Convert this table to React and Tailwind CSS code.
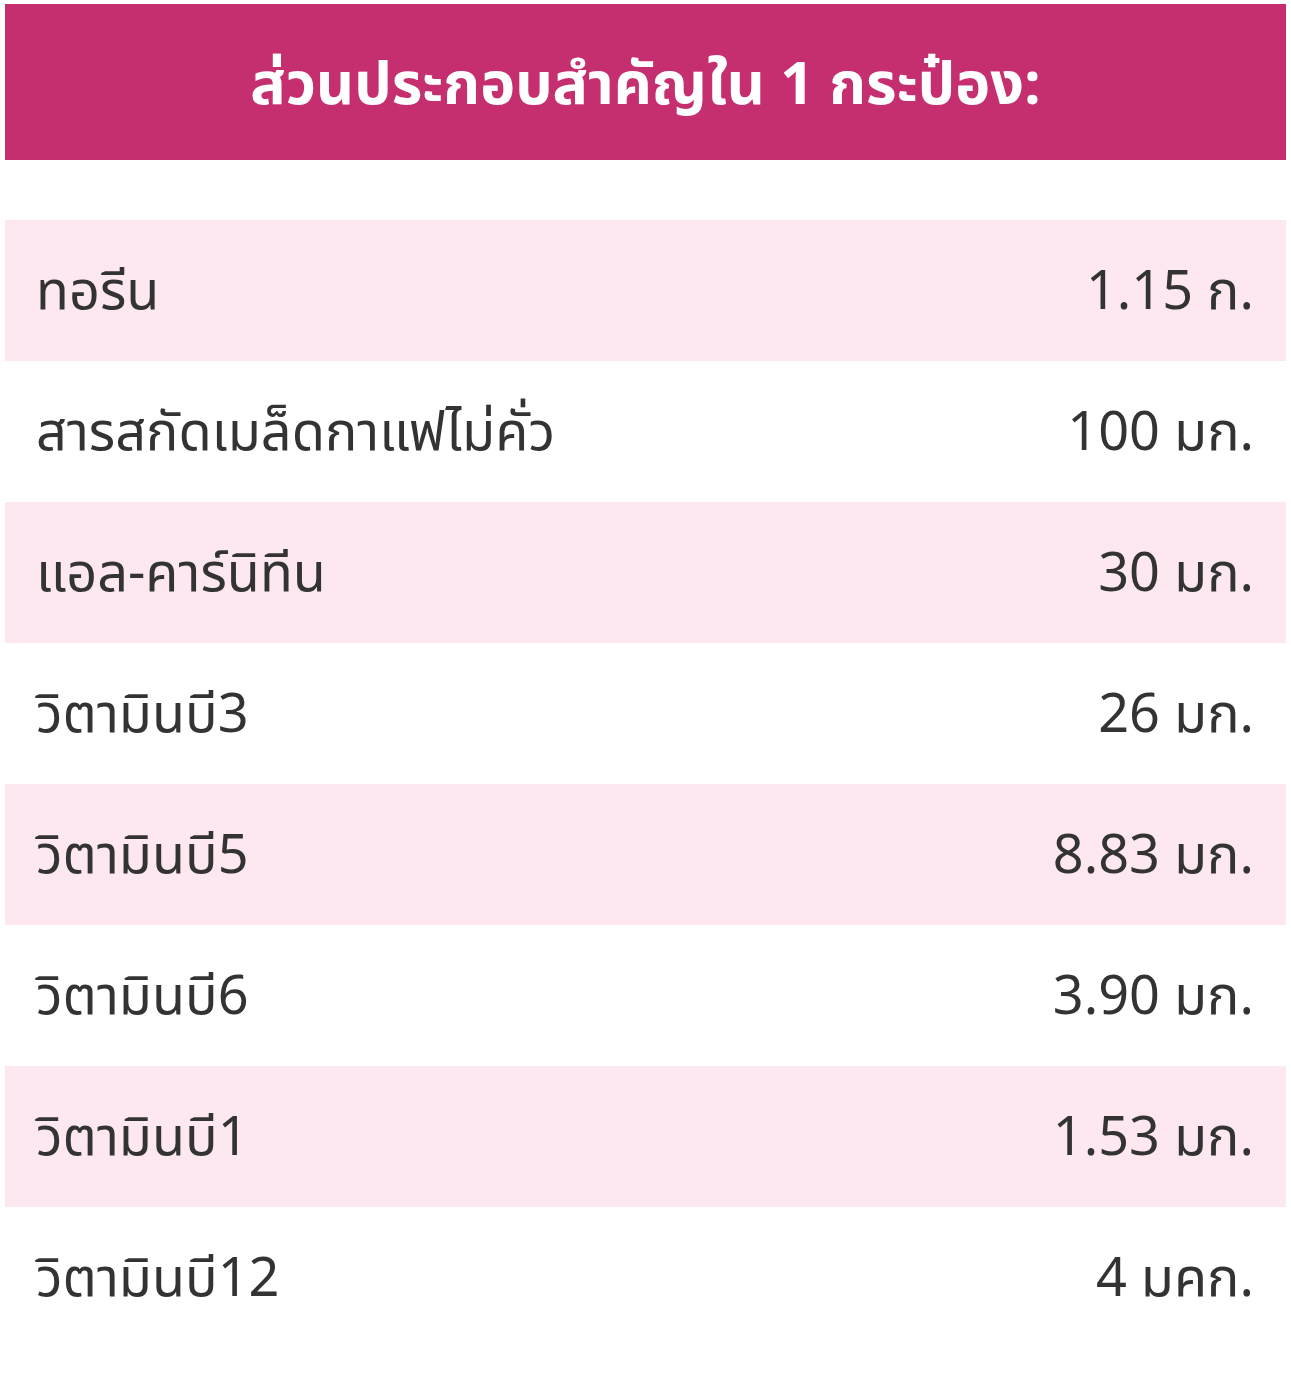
import React from 'react';

const items = [
  { name: 'ทอรีน', amount: '1.15 ก.' },
  { name: 'สารสกัดเมล็ดกาแฟไม่คั่ว', amount: '100 มก.' },
  { name: 'แอล-คาร์นิทีน', amount: '30 มก.' },
  { name: 'วิตามินบี3', amount: '26 มก.' },
  { name: 'วิตามินบี5', amount: '8.83 มก.' },
  { name: 'วิตามินบี6', amount: '3.90 มก.' },
  { name: 'วิตามินบี1', amount: '1.53 มก.' },
  { name: 'วิตามินบี12', amount: '4 มคก.' },
];

export default function App() {
  return (
    <div
      className="min-h-[1384px] bg-white px-[5px] pt-[4px] pb-[36px]"
      style={{ fontFamily: '"Noto Sans Thai", "Noto Sans", sans-serif' }}
    >
      {/* Header */}
      <div className="flex h-[156px] items-center justify-center bg-[#c52f6f] pt-[8px]">
        <h2 className="text-[59px] font-bold text-white">ส่วนประกอบสำคัญใน 1 กระป๋อง:</h2>
      </div>

      {/* Ingredients */}
      <div className="mt-[60px]">
        {items.map((item, index) => (
          <div
            key={index}
            className={`flex h-[141px] items-center justify-between pl-[31px] pr-[32px] pt-[4px] text-[54px] font-normal text-[#333333] ${
              index % 2 === 0 ? 'bg-[#fde8f1]' : 'bg-white'
            }`}
          >
            <span>{item.name}</span>
            <span>{item.amount}</span>
          </div>
        ))}
      </div>
    </div>
  );
}
